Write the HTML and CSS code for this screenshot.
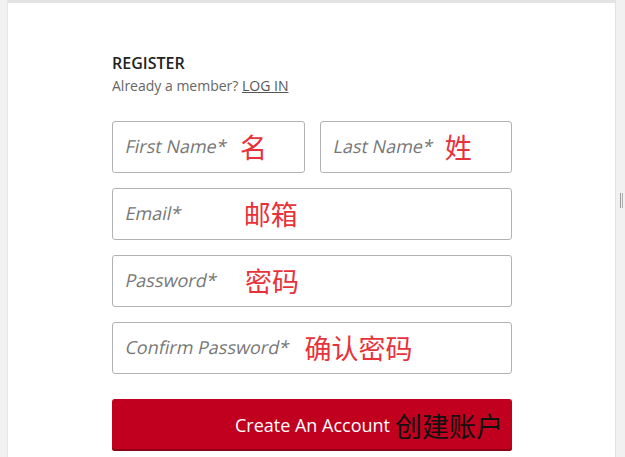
FILE: index.html
```html
<!DOCTYPE html>
<html lang="en">
<head>
<meta charset="utf-8">
<title>Register</title>
<link rel="stylesheet" href="styles.css">
</head>
<body>
<div class="page">
  <div class="panel">
    <form class="register">
      <h1 class="title">REGISTER</h1>
      <p class="member">Already a member? <a href="#" class="login">LOG IN</a></p>
      <div class="row">
        <div class="field"><span class="ph">First Name*</span><span class="zh zh-first">名</span></div>
        <div class="field"><span class="ph">Last Name*</span><span class="zh zh-last">姓</span></div>
      </div>
      <div class="field"><span class="ph">Email*</span><span class="zh zh-email">邮箱</span></div>
      <div class="field"><span class="ph">Password*</span><span class="zh zh-pass">密码</span></div>
      <div class="field"><span class="ph">Confirm Password*</span><span class="zh zh-confirm">确认密码</span></div>
      <button type="button" class="submit"><span class="btn-en">Create An Account</span><span class="btn-zh">创建账户</span></button>
    </form>
  </div>
  <div class="scroll-grip"></div>
</div>
</body>
</html>
```
FILE: styles.css
```css
html, body {
  margin: 0;
  padding: 0;
  height: 100%;
}
body {
  background: #eeeeee;
  font-family: "Open Sans", "Noto Sans CJK SC", sans-serif;
  overflow: hidden;
}
.page {
  position: relative;
  height: 457px;
  padding: 3px 9px 0 7px;
  box-sizing: border-box;
  background: #f1f1f1;
}
.panel {
  background: #ffffff;
  height: 100%;
  border-left: 1px solid #e6e6e6;
  border-right: 1px solid #e2e2e2;
  box-sizing: border-box;
  padding: 49px 0 0 104px;
  box-shadow: 0 -3px 0 #e3e3e3;
}
.register {
  width: 400px;
}
.title {
  margin: 0;
  font-size: 16px;
  line-height: 22px;
  font-weight: 600;
  color: #222222;
}
.member {
  margin: 2px 0 0;
  font-size: 14px;
  line-height: 20px;
  color: #666666;
}
.login {
  color: #555555;
  text-decoration: underline;
}
.row {
  display: flex;
  gap: 15px;
  margin-top: 25px;
}
.row .field {
  flex: 1;
}
.field {
  display: flex;
  align-items: center;
  height: 52px;
  box-sizing: border-box;
  border: 1px solid #b3b3b3;
  border-radius: 3px;
  padding: 0 12px 2px;
  margin-bottom: 15px;
  background: #fff;
}
.ph {
  display: inline-block;
  font-style: normal;
  font-size: 18px;
  color: #777777;
  white-space: nowrap;
  transform: skewX(-12deg);
  transform-origin: 0 70%;
}
.zh {
  font-family: "Noto Sans CJK SC", sans-serif;
  font-size: 27px;
  color: #e8323a;
  line-height: 1;
}
.zh-first { margin-left: 14px; }
.zh-last { margin-left: 13px; }
.zh-email { margin-left: 63px; }
.zh-pass { margin-left: 29px; }
.zh-confirm { margin-left: 16px; }
.submit {
  display: flex;
  align-items: center;
  justify-content: flex-end;
  width: 400px;
  height: 52px;
  margin-top: 25px;
  padding: 0 9px 0 0;
  border: 0;
  border-radius: 3px;
  background: #c0001e;
  box-shadow: inset 0 -2px 0 #8e0016;
  cursor: pointer;
}
.btn-en {
  font-family: "Open Sans", sans-serif;
  font-size: 18px;
  color: #ffffff;
  margin-right: 5px;
}
.btn-zh {
  font-family: "Noto Sans CJK SC", sans-serif;
  font-size: 27px;
  color: #111111;
  line-height: 1;
}
.scroll-grip {
  position: absolute;
  left: 620px;
  top: 193px;
  width: 1px;
  height: 15px;
  border-left: 1px solid #9a9a9a;
  border-right: 1px solid #b0b0b0;
}
```
